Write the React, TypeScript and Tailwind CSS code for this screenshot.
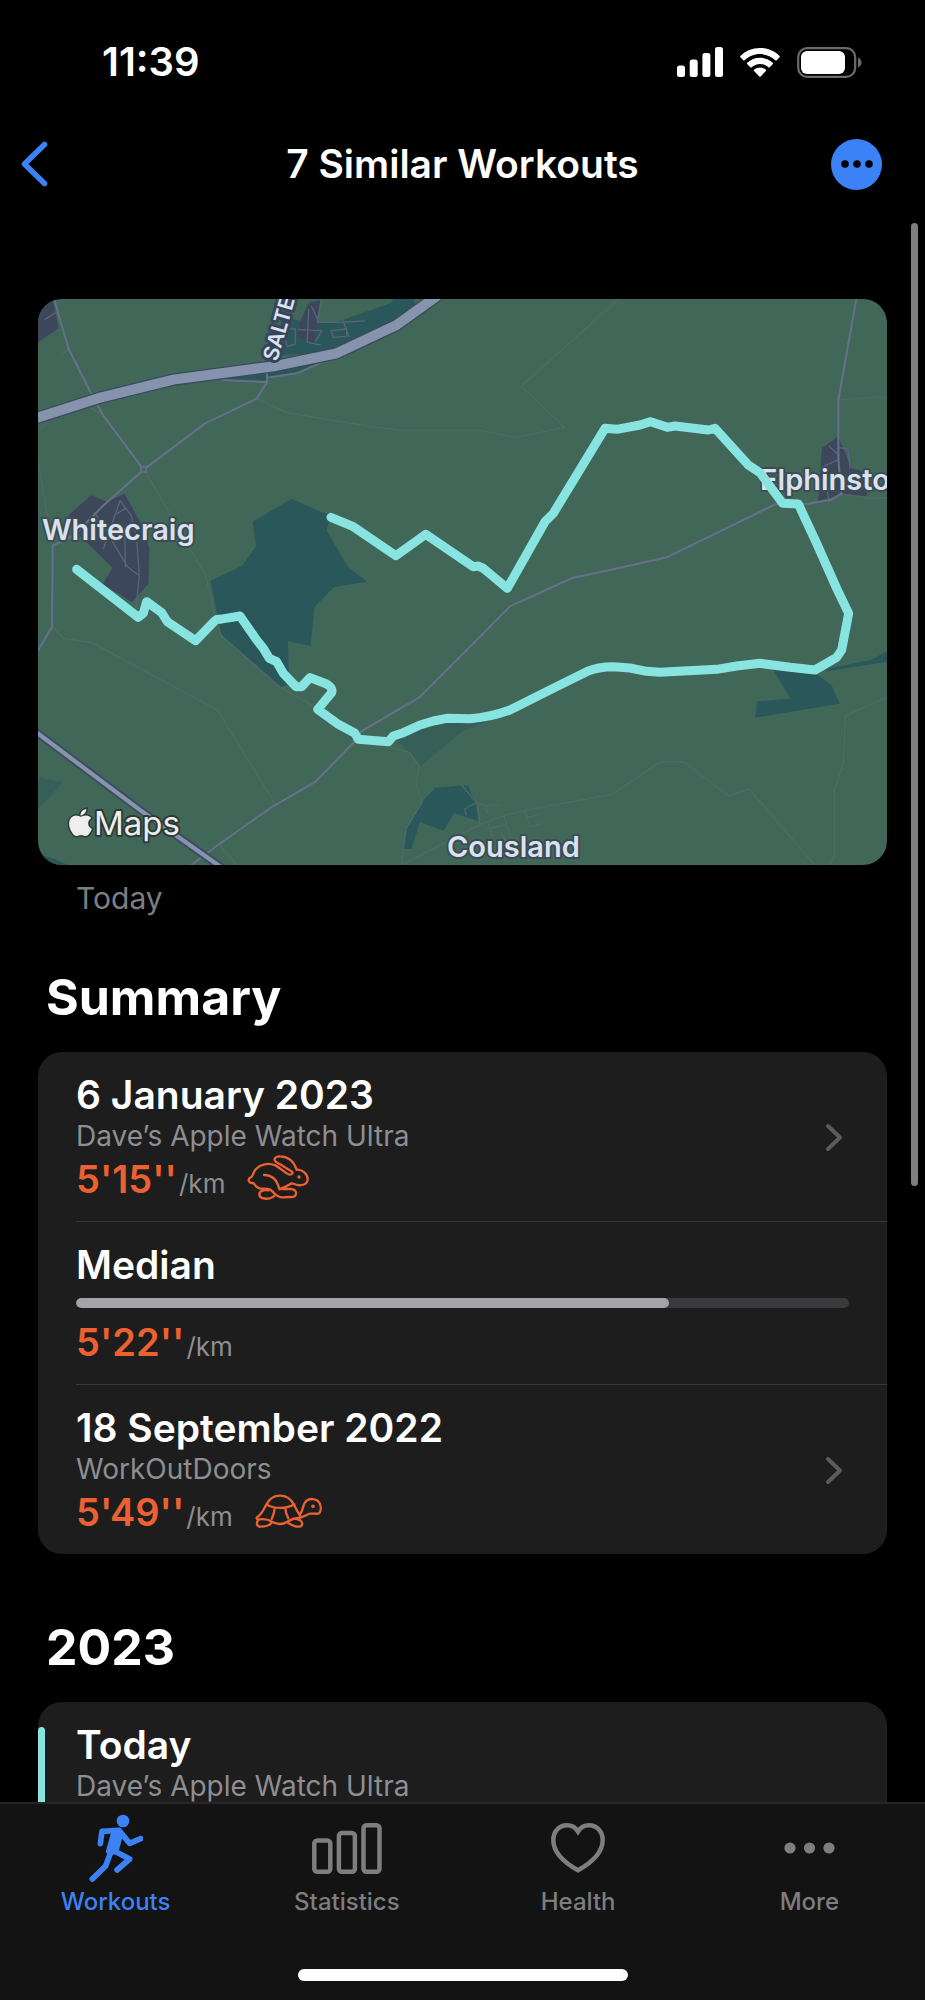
import React from 'react';
import { FaApple } from 'react-icons/fa';

const routePath =
  'M116 811 L301 955 L316 943 L326 908 L371 941 L388 968 L473 1025 L531 965 Q537 960 545 961 L606 951 L656 1023 L676 1048 L694 1078 L716 1088 L736 1123 L774 1163 L791 1163 L816 1136 L866 1155 Q886 1168 881 1181 L839 1231 L901 1276 L951 1303 L961 1321 L1051 1328 L1066 1311 L1096 1301 L1146 1278 L1186 1266 L1226 1258 L1296 1259 Q1356 1255 1416 1233 L1546 1168 L1646 1118 Q1680 1103 1726 1103 L1776 1107 L1826 1117 L1866 1120 L2036 1111 L2096 1101 L2166 1093 L2256 1105 L2331 1113 L2396 1075 L2411 1053 L2432 943 L2396 868 L2336 733 L2281 615 L2234 613 L2166 521 L2131 498 L2031 388 L2011 393 L1911 381 L1888 385 L1838 368 L1806 378 L1736 391 L1701 388 L1546 643 L1521 668 L1408 868 L1336 808 L1321 801 L1306 803 L1163 706 L1074 770 L946 683 L879 655';

const SignalIcon = () => (
  <svg width="46" height="30" viewBox="0 0 46 30" fill="currentColor" aria-hidden="true">
    <rect x="0" y="18.500" width="8" height="11.500" rx="2.500" />
    <rect x="12.700" y="12.500" width="8" height="17.500" rx="2.500" />
    <rect x="25.400" y="6" width="8" height="24" rx="2.500" />
    <rect x="38" y="0" width="8" height="30" rx="2.500" />
  </svg>
);

const WifiIcon = () => (
  <svg width="40" height="29" viewBox="0 0 40 29" fill="currentColor" aria-hidden="true">
    <path d="M20 0C27.600 0 34.500 3 39.600 7.900c.4.4.4 1 0 1.400l-2.900 3c-.4.4-1 .4-1.400 0C31.300 8.500 25.900 6.100 20 6.100S8.700 8.500 4.700 12.300c-.4.4-1 .4-1.400 0l-2.900-3c-.4-.4-.4-1 0-1.400C5.500 3 12.400 0 20 0Z" />
    <path d="M20 9.800c4.900 0 9.400 1.900 12.700 5 .4.4.4 1 0 1.400l-3 3c-.4.4-1 .4-1.400 0-2.200-2-5.100-3.300-8.300-3.300s-6.100 1.300-8.300 3.300c-.4.4-1 .4-1.400 0l-3-3c-.4-.4-.4-1 0-1.400 3.300-3.100 7.800-5 12.700-5Z" />
    <path d="M20 19.500c2.300 0 4.300.8 5.900 2.200.4.4.4 1 0 1.400l-5.200 5.300c-.4.4-1 .4-1.400 0l-5.200-5.300c-.4-.4-.4-1 0-1.400 1.600-1.400 3.600-2.200 5.900-2.200Z" />
  </svg>
);

const BatteryIcon = () => (
  <svg width="65" height="31" viewBox="0 0 65 31" aria-hidden="true">
    <rect x="1.200" y="1.200" width="57" height="28.600" rx="9" fill="none" stroke="#6b6b6b" strokeWidth="2.200" />
    <rect x="4" y="4" width="44" height="23" rx="6" fill="#fff" />
    <path d="M61 10.500c2 .8 3.500 2.700 3.500 5s-1.500 4.200-3.500 5Z" fill="#6b6b6b" />
  </svg>
);

const RabbitIcon = () => (
  <svg
    width="62"
    height="46"
    viewBox="55 48 186 138"
    fill="none"
    stroke="#eb6132"
    strokeWidth="7"
    strokeLinecap="round"
    strokeLinejoin="round"
    aria-hidden="true"
  >
    <path d="M204 92C196 68 178 53 155 52c-14-1-21 8-15 15 5 6 12 6 18 11l32 20c4 4 0 9-6 9-14-3-28-20-44-28-22-9-45-3-58 11-11 12-7 21-16 25-8 3-8 13-1 16 4 2 8 0 11 3 5 8 11 15 22 15l20 1c10 0 12 7 18 12 8 8 14 14 26 13l22-1c24 4 24-24 2-24l-24 0" />
    <path d="M204 92c17-1 33 13 33 28 0 18-20 20-30 18-8 0-13-6-18-5-9 4-17 11-25 13l-12 5c-6-27-20-43-46-43" />
    <path d="M120 154c-14-3-27 1-28 11-1 13 17 16 31 13 6-1 10-4 15-8" />
    <circle cx="211" cy="114" r="5" fill="#eb6132" stroke="none" />
  </svg>
);

const TurtleIcon = () => (
  <svg
    width="67"
    height="34"
    viewBox="677 819 201 102"
    fill="none"
    stroke="#eb6132"
    strokeWidth="7"
    strokeLinecap="round"
    strokeLinejoin="round"
    aria-hidden="true"
  >
    <path d="M683 889c14-8 20-24 28-38 8-16 21-27 41-27s34 12 42 27c6 12 11 22 18 32 4 5 0 8-6 8-18 1-24 6-32 11-14 9-32 8-46 0-9-6-20-9-38-7-6 1-10-2-7-6Z" />
    <path d="M712 850c20 14 60 15 83 0M736 862c-1 12-4 22-9 32M768 862c1 12 4 21 9 30" />
    <path d="M688 896c-8 8-7 21 6 21 14 0 28-5 34-13" />
    <path d="M776 905c8 5 19 13 32 12 12 0 13-11 7-17-4-4-10-5-16-7" />
    <path d="M811 880c10-8 8-22 15-34 10-17 37-15 45 1 4 9 4 22 0 28-6 7-17 1-29 3-11 2-18 11-34 13" />
    <circle cx="851" cy="856" r="5.500" fill="#eb6132" stroke="none" />
  </svg>
);

const RunnerIcon = () => (
  <svg
    width="55"
    height="68"
    viewBox="55 42 165 204"
    fill="none"
    stroke="currentColor"
    strokeWidth="17"
    strokeLinecap="round"
    strokeLinejoin="round"
    aria-hidden="true"
  >
    <circle cx="160" cy="63" r="19" fill="currentColor" stroke="none" />
    <path d="M92 131 97 94 148 91 180 130 213 116" />
    <path d="M128 150 180 177 142 210" />
    <path d="M127 146 108 198 68 237" />
    <path d="M124 98 150 86Q164 90 160 104L146 158 120 168 108 156Z" fill="currentColor" stroke="none" />
  </svg>
);

const StatsIcon = () => (
  <svg width="70" height="51" viewBox="0 0 70 51" fill="none" stroke="currentColor" strokeWidth="4.500" aria-hidden="true">
    <rect x="2.300" y="17.500" width="16" height="31.200" rx="3" />
    <rect x="26.900" y="10" width="16" height="38.700" rx="3" />
    <rect x="51.500" y="2.300" width="16" height="46.400" rx="3" />
  </svg>
);

const HeartIcon = () => (
  <svg width="54" height="50" viewBox="0 0 54 50" fill="none" stroke="currentColor" strokeWidth="4.500" aria-hidden="true">
    <path d="M27 8.500C24.500 4.500 20.500 2.300 16 2.300 8 2.300 2.300 8.700 2.300 17 2.300 30 14 40 27 47.300 40 40 51.700 30 51.700 17 51.700 8.700 46 2.300 38 2.300c-4.500 0-8.500 2.200-11 6.200Z" />
  </svg>
);

const DotsIcon = () => (
  <svg width="51" height="12" viewBox="0 0 51 12" fill="currentColor" aria-hidden="true">
    <circle cx="6" cy="6" r="5.600" />
    <circle cx="25.500" cy="6" r="5.600" />
    <circle cx="45" cy="6" r="5.600" />
  </svg>
);

const RouteMap = () => (
  <svg viewBox="0 0 849 566" className="block w-full rounded-3xl bg-[#416759]" role="img" aria-label="Route map">
    <g transform="scale(0.333333)" fill="none" strokeLinejoin="round">
      {/* woodland and water */}
      <g fill="#29575a">
        <path d="M726 53 L776 63 L836 73 L896 70 L1056 13 L1071 -2 L1126 -2 L1136 23 L1026 93 L876 158 L716 170 L736 143Z" />
        <path d="M551 243 L676 245 L700 238 L776 223 L856 188 L676 218Z" />
        <path d="M760 600 L877 650 L866 695 L930 803 L987 848 L888 864 L829 925 L818 1041 L750 1027 L752 1105 L757 1153 L727 1165 L549 1009 L518 845 L612 801 L654 742 L644 668Z" />
        <path d="M2206 1113 L2336 1126 L2380 1157 L2405 1214 L2151 1256 L2157 1207 L2258 1199Z" />
        <path d="M2366 1110 L2500 1082 L2547 1057 L2547 1088 L2366 1117Z" />
        <path d="M1192 1466 L1290 1458 L1302 1490 L1316 1510 L1322 1567 L1248 1542 L1217 1595 L1146 1570 L1120 1650 L1095 1650 L1104 1590 L1154 1507Z" />
        <path d="M0 1665 L50 1680 L90 1698 L0 1698Z" />
      </g>
      <path d="M0 1435 L74 1450 L0 1533Z M1076 1322 L1186 1270 L1360 1260 L1270 1300 L1147 1402 L1115 1361Z" fill="#365f58" />
      {/* built-up areas */}
      <g fill="#3d475b">
        <path d="M0 0 L44 0 L62 87 L0 130Z" />
        <path d="M812 12 L850 2 L838 60 L836 95 L828 133 L776 115 L790 60Z" />
        <path d="M90 650 L159 589 L208 608 L260 584 L312 680 L334 750 L331 855 L282 910 L194 855 L224 806 L120 705Z" />
        <path d="M2401 412 L2352 448 L2340 607 L2420 584 L2485 592 L2505 525 L2440 508Z" />
      </g>
      {/* footpaths */}
      <g stroke="#506a66" strokeWidth="4">
        <path d="M656 299 L746 341 L920 370 L1090 395 L1332 395 L1430 416 L1579 385 L1450 261 L1742 0" />
        <path d="M2401 303 L2547 293 M2405 584 L2500 599 L2547 595" />
        <path d="M324 520 L450 740 L503 828 L532 960 L549 1009 L727 1165 L835 1225" />
        <path d="M42 983 L76 1018 L160 1030 L538 1233 L712 1515" />
        <path d="M0 490 L20 600 L36 690" />
        <path d="M1040 1340 L1115 1361 L1143 1400 L1134 1450 L1152 1510 L1104 1590 L1090 1698" />
        <path d="M1090 1698 L1326 1577 L1397 1550 L1460 1534 L1722 1486 L1866 1389 L1938 1389 L2072 1491 L2133 1470 L2330 1698" />
        <path d="M2547 1195 L2422 1250 L2416 1394 L2389 1474 L2389 1675 L2372 1698" />
        <path d="M1270 1458 L1316 1510 L1326 1577 M1316 1510 L1280 1530 L1285 1550 M1316 1512 L1340 1520 L1380 1519 M1342 1520 L1348 1545 M1350 1570 L1366 1620 M1360 1587 L1404 1577 M1397 1550 L1420 1617 M1460 1534 L1476 1583 L1515 1573 M1470 1555 L1505 1545 M1390 1600 L1436 1698" />
        <path d="M544 1635 L595 1698 M150 322 L190 345 M0 395 L30 368 M75 165 L95 145" />
      </g>
      {/* streets */}
      <g stroke="#59637a" strokeWidth="4">
        <path d="M20 62 L60 36 M196 750 L246 605 L280 650 L296 720 L304 830 M170 640 L270 805 L304 830 L294 930 M260 690 L262 805 M236 645 L262 628" />
        <path d="M740 90 L772 90 L772 135 L748 143 L740 115Z M812 30 L808 130 L848 138 M780 92 L852 95 L832 128 M820 20 L838 60 M850 0 L838 70 L896 70 L980 66 M880 95 L926 90 L926 112 L885 115Z M914 62 L934 115" />
        <path d="M2372 440 L2405 470 M2405 480 L2350 505 M2366 560 L2372 600 M2400 445 L2430 450 L2436 510" />
      </g>
      {/* roads */}
      <g stroke="#67708a" strokeWidth="6">
        <path d="M48 0 L92 150 L160 285 L196 350 L317 512 L500 374 L656 299 L687 250 L687 215" />
        <path d="M317 512 L190 625 L110 708 L44 740 L42 983 L0 1055" />
        <path d="M551 243 L687 249 M687 236 L776 223 L856 188" />
        <path d="M2455 0 L2401 303 L2401 480 L2410 584 L2380 602 L2310 614 L2212 616 L1886 775 L1720 812 L1606 836 L1530 870 L1416 922 L1316 1023 L1144 1195 L970 1297 L944 1333 L833 1448 L700 1525 L544 1635 L460 1698" />
      </g>
      <rect x="309" y="504" width="15" height="15" fill="#416759" stroke="#67708a" strokeWidth="5" />
      {/* railway and motorway */}
      <path d="M-10 1296 L306 1533 L560 1712" stroke="#3c4a60" strokeWidth="24" />
      <path d="M-10 1296 L306 1533 L560 1712" stroke="#8593ad" strokeWidth="13" />
      <path d="M-20 362 L190 295 L406 242 L706 202 L896 163 L1076 78 L1240 -40" stroke="#3c4a60" strokeWidth="38" />
      <path d="M-20 362 L190 295 L406 242 L706 202 L896 163 L1076 78 L1240 -40" stroke="#8593ad" strokeWidth="30" />
    </g>
    <g
      fill="#dbe2ee"
      stroke="#3b4c55"
      strokeWidth="4"
      strokeLinejoin="round"
      paintOrder="stroke"
      className="font-semibold"
    >
      <text x="4" y="241" fontSize="29">Whitecraig</text>
      <text x="722" y="191" fontSize="29">Elphinsto</text>
      <text x="409" y="558" fontSize="29">Cousland</text>
      <text transform="translate(239 63) rotate(-74)" fontSize="21" stroke="#36455b" strokeWidth="6">SALTE</text>
      <text x="56" y="536" fontSize="33" fill="#eeeeee" stroke="#2c3a34" className="font-normal">Maps</text>
    </g>
    <FaApple x="27" y="508" size={31} fill="#eeeeee" stroke="#2c3a34" strokeWidth="50" paintOrder="stroke" />
    <path
      d={routePath}
      transform="scale(0.333333)"
      fill="none"
      stroke="#88e4e0"
      strokeWidth="27"
      strokeLinecap="round"
      strokeLinejoin="round"
    />
  </svg>
);

const Pace = ({ value, children }: { value: string; children?: React.ReactNode }) => (
  <div className="flex h-[52px] items-center">
    <p className="flex items-baseline gap-0.5 leading-[52px]">
      <span className="text-[38px] font-semibold text-[#eb6132]">{value}</span>
      <span className="text-[26px] text-[#8e8e93]">/km</span>
    </p>
    {children}
  </div>
);

const Chevron = () => (
  <svg
    width="18"
    height="29"
    viewBox="0 0 18 29"
    fill="none"
    stroke="#5b5b5f"
    strokeWidth="4"
    strokeLinecap="round"
    strokeLinejoin="round"
    aria-hidden="true"
  >
    <path d="M3 3 15 14.500 3 26" />
  </svg>
);

type WorkoutRowProps = {
  title: string;
  source: string;
  pace?: string;
  icon?: React.ReactNode;
};

const WorkoutRow = ({ title, source, pace, icon }: WorkoutRowProps) => (
  <a href="#workout" className="block pt-[21px] pr-11 pb-3.5">
    <div className="flex items-center justify-between">
      <div>
        <h3 className="text-[39px] leading-[44px] font-semibold">{title}</h3>
        <p className="text-[28px] leading-[38px] text-[#8e8e93]">{source}</p>
        {pace && (
          <Pace value={pace}>
            <span className="mb-1.5 ml-[22px]">{icon}</span>
          </Pace>
        )}
      </div>
      {pace && (
        <span className="pb-1.5">
          <Chevron />
        </span>
      )}
    </div>
  </a>
);

const tabs = [
  { label: 'Workouts', icon: <RunnerIcon />, active: true },
  { label: 'Statistics', icon: <StatsIcon />, active: false },
  { label: 'Health', icon: <HeartIcon />, active: false },
  { label: 'More', icon: <DotsIcon />, active: false },
];

const App = () => {
  return (
    <div className="flex h-screen flex-col overflow-hidden bg-black font-['Inter',sans-serif] text-white">
      <div className="flex h-[124px] shrink-0 items-center justify-between pr-[63px] pl-[102px]">
        <time className="text-[40px] font-semibold">11:39</time>
        <div className="flex items-center gap-[17px]">
          <SignalIcon />
          <WifiIcon />
          <BatteryIcon />
        </div>
      </div>

      <header className="mb-[19px] grid h-20 shrink-0 grid-cols-[1fr_auto_1fr] items-center">
        <button type="button" aria-label="Back" className="justify-self-start pl-[21px] text-[#3b82f7]">
          <svg
            width="27"
            height="46"
            viewBox="0 0 27 46"
            fill="none"
            stroke="currentColor"
            strokeWidth="5.500"
            strokeLinecap="round"
            strokeLinejoin="round"
          >
            <path d="M23.500 3.500 3.500 23 23.500 42.500" />
          </svg>
        </button>
        <h1 className="text-[39px] font-semibold">7 Similar Workouts</h1>
        <button
          type="button"
          aria-label="More options"
          className="mr-[43px] flex size-[51px] items-center justify-center justify-self-end rounded-full bg-[#3b82f7]"
        >
          <svg width="32" height="8" viewBox="0 0 32 8" fill="#000">
            <circle cx="4" cy="4" r="3.800" />
            <circle cx="16" cy="4" r="3.800" />
            <circle cx="28" cy="4" r="3.800" />
          </svg>
        </button>
      </header>

      <div className="relative min-h-0 flex-1">
        <main className="h-full overflow-hidden px-[38px] pt-[76px]">
          <figure>
            <RouteMap />
            <figcaption className="mt-[13px] ml-[38px] text-[30px] leading-10 text-[#7d7d82]">Today</figcaption>
          </figure>

          <section className="mt-[49px]">
            <h2 className="mb-[25px] ml-2 text-[50px] leading-[60px] font-bold">Summary</h2>
            <div className="rounded-3xl bg-[#1d1d1d] pl-[38px]">
              <WorkoutRow title="6 January 2023" source="Dave’s Apple Watch Ultra" pace="5'15''" icon={<RabbitIcon />} />
              <div className="border-y border-[#38383a] pt-[21px] pb-3.5">
                <h3 className="text-[39px] leading-[44px] font-semibold">Median</h3>
                <div className="mt-[11px] mr-[38px] mb-2.5 h-2.5 overflow-hidden rounded-full bg-[#3a3a3c]">
                  <div className="h-full w-[76.7%] rounded-full bg-[#a3a3a9]"></div>
                </div>
                <Pace value="5'22''" />
              </div>
              <WorkoutRow title="18 September 2022" source="WorkOutDoors" pace="5'49''" icon={<TurtleIcon />} />
            </div>
          </section>

          <section className="mt-[63px]">
            <h2 className="mb-[25px] ml-2 text-[50px] leading-[60px] font-bold">2023</h2>
            <div className="flex rounded-t-3xl bg-[#1d1d1d]">
              <div className="mt-[25px] mr-[31px] w-[7px] rounded-t-full bg-[#88e4e0]"></div>
              <WorkoutRow title="Today" source="Dave’s Apple Watch Ultra" />
            </div>
          </section>
        </main>
        <div className="absolute top-0 right-[7px] h-[61%] w-[7px] rounded-full bg-[#7f7f7f]"></div>
      </div>

      <footer className="shrink-0 border-t-2 border-[#262626] bg-[#131313] pt-2.5 pb-[19px]">
        <nav className="grid grid-cols-4">
          {tabs.map((tab) => (
            <a
              key={tab.label}
              href="#tab"
              className={`flex flex-col items-center ${tab.active ? 'text-[#3b82f7]' : 'text-[#7e7e7e]'}`}
            >
              <span className="flex h-[68px] items-center">{tab.icon}</span>
              <span className="mt-1 text-[24px] leading-8 font-medium">{tab.label}</span>
            </a>
          ))}
        </nav>
        <div className="mx-auto mt-[51px] h-3 w-[330px] rounded-full bg-white"></div>
      </footer>
    </div>
  );
};

export default App;
